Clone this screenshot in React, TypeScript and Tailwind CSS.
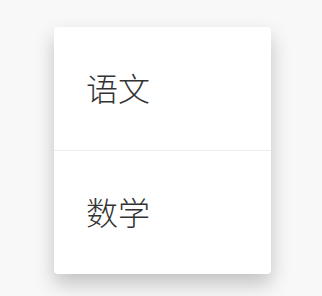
import React from "react";

export default function App() {
  return (
    <div
      className="w-[322px] h-[296px] bg-[#f8f8f8] pt-[27px] pl-[54px] overflow-hidden"
      style={{ fontFamily: '"Noto Sans CJK SC", "Noto Sans", sans-serif' }}
    >
      <div className="w-[217px] bg-white rounded-[4px] shadow-[0_10px_20px_rgba(0,0,0,0.22)] overflow-hidden">
        <div className="h-[124px] flex items-center pl-[32px] pb-[4px] text-[32px] leading-none font-light text-[#333333] border-b border-[#ececec]">
          语文
        </div>
        <div className="h-[123px] flex items-center pl-[32px] pb-[4px] text-[32px] leading-none font-light text-[#333333]">
          数学
        </div>
      </div>
    </div>
  );
}
